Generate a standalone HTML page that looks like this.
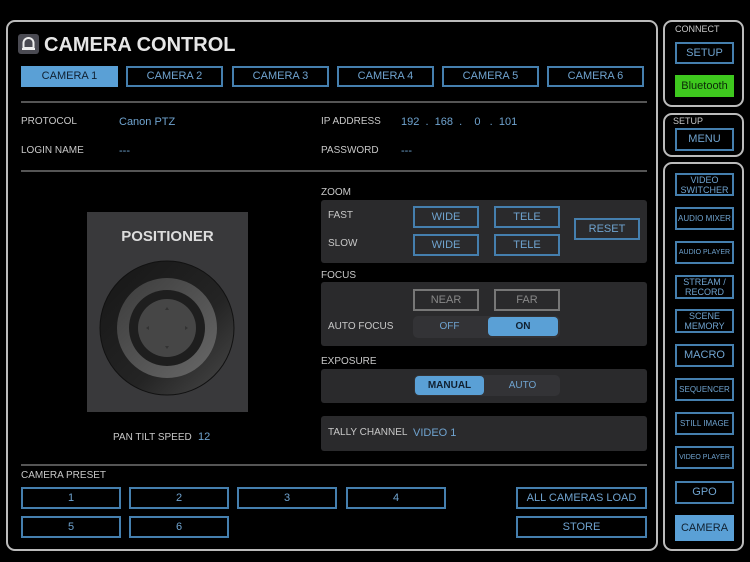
<!DOCTYPE html>
<html><head><meta charset="utf-8"><style>
*{margin:0;padding:0;box-sizing:border-box}
body{width:750px;height:562px;background:#000;position:relative;overflow:hidden;font-family:"Liberation Sans",sans-serif;color:#ccc}
div{position:absolute}
.fr{border:2px solid #bbb;border-radius:9px}
.b{border:2px solid #457fae;color:#6fa3cf;font-size:11px;display:flex;align-items:center;justify-content:center;text-align:center;line-height:11px}
.on{background:#5aa0d6;color:#102030;border-color:#5aa0d6}
.l{font-size:10px;color:#c8c8c8;white-space:nowrap}
.v{font-size:11px;color:#6fa3cf;white-space:nowrap}
.hr{height:2px;background:#555}
.p{background:#2a2a2c;border-radius:3px}
.s{font-size:8px}
</style></head><body>
<div class="fr" style="left:6px;top:20px;width:652px;height:531px"></div>
<div class="fr" style="left:663px;top:20px;width:81px;height:87px"></div>
<div class="fr" style="left:663px;top:113px;width:81px;height:44px"></div>
<div class="fr" style="left:663px;top:162px;width:81px;height:389px"></div>

<div style="left:18px;top:34px;width:21px;height:20px;background:#4a4a52;border-radius:3px"></div>
<svg style="position:absolute;left:18px;top:34px" width="21" height="20"><path d="M5.5 14 V9 a5 5 0 0 1 10 0 V14 Z" fill="none" stroke="#eee" stroke-width="2"/><rect x="4" y="14" width="13" height="2" fill="#eee"/></svg>
<div style="left:44px;top:34px;font-size:20px;font-weight:bold;color:#e6e6e6">CAMERA CONTROL</div>

<div class="b on" style="left:21px;top:66px;width:97px;height:21px">CAMERA 1</div>
<div class="b" style="left:126px;top:66px;width:97px;height:21px">CAMERA 2</div>
<div class="b" style="left:232px;top:66px;width:97px;height:21px">CAMERA 3</div>
<div class="b" style="left:337px;top:66px;width:97px;height:21px">CAMERA 4</div>
<div class="b" style="left:442px;top:66px;width:97px;height:21px">CAMERA 5</div>
<div class="b" style="left:547px;top:66px;width:97px;height:21px">CAMERA 6</div>

<div class="hr" style="left:21px;top:101px;width:626px"></div>
<div class="l" style="left:21px;top:116px">PROTOCOL</div>
<div class="v" style="left:119px;top:116px">Canon PTZ</div>
<div class="l" style="left:21px;top:145px">LOGIN NAME</div>
<div class="v" style="left:119px;top:145px">---</div>
<div class="l" style="left:321px;top:116px">IP ADDRESS</div>
<div class="v" style="left:401px;top:116px">192&nbsp; .&nbsp; 168&nbsp; .&nbsp;&nbsp;&nbsp; 0&nbsp;&nbsp; .&nbsp; 101</div>
<div class="l" style="left:321px;top:145px">PASSWORD</div>
<div class="v" style="left:401px;top:145px">---</div>
<div class="hr" style="left:21px;top:170px;width:626px"></div>

<div style="left:87px;top:212px;width:161px;height:200px;background:#39393b"></div>
<div style="left:87px;top:228px;width:161px;text-align:center;font-size:15px;font-weight:bold;color:#ddd">POSITIONER</div>
<svg style="position:absolute;left:87px;top:250px" width="161" height="160">
<defs><linearGradient id="g" x1="0" y1="0" x2="1" y2="1"><stop offset="0" stop-color="#161616"/><stop offset="0.6" stop-color="#242424"/><stop offset="1" stop-color="#4a4a4a"/></linearGradient>
<linearGradient id="g2" x1="0" y1="0" x2="1" y2="1"><stop offset="0" stop-color="#3c3c3c"/><stop offset="1" stop-color="#686868"/></linearGradient></defs>
<circle cx="80" cy="78" r="67" fill="url(#g)" stroke="#111" stroke-width="1"/>
<circle cx="80" cy="78" r="50" fill="url(#g2)"/>
<circle cx="80" cy="78" r="38" fill="#1e1e1e"/>
<circle cx="80" cy="78" r="29" fill="#464646"/>
<path d="M78 60 l2-3 2 3z M78 96 l2 3 2-3z M62 76 l-3 2 3 2z M98 76 l3 2-3 2z" fill="#333"/>
</svg>
<div class="l" style="left:113px;top:432px">PAN TILT SPEED</div>
<div class="v" style="left:198px;top:431px">12</div>

<div class="l" style="left:321px;top:187px">ZOOM</div>
<div class="p" style="left:321px;top:200px;width:326px;height:63px"></div>
<div class="l" style="left:328px;top:210px">FAST</div>
<div class="l" style="left:328px;top:238px">SLOW</div>
<div class="b" style="left:413px;top:206px;width:66px;height:22px">WIDE</div>
<div class="b" style="left:494px;top:206px;width:66px;height:22px">TELE</div>
<div class="b" style="left:413px;top:234px;width:66px;height:22px">WIDE</div>
<div class="b" style="left:494px;top:234px;width:66px;height:22px">TELE</div>
<div class="b" style="left:574px;top:218px;width:66px;height:22px">RESET</div>

<div class="l" style="left:321px;top:270px">FOCUS</div>
<div class="p" style="left:321px;top:282px;width:326px;height:64px"></div>
<div class="b" style="left:413px;top:289px;width:66px;height:22px;border-color:#777;color:#888">NEAR</div>
<div class="b" style="left:494px;top:289px;width:66px;height:22px;border-color:#777;color:#888">FAR</div>
<div class="l" style="left:328px;top:321px">AUTO FOCUS</div>
<div style="left:413px;top:316px;width:147px;height:22px;background:#333336;border-radius:5px"></div>
<div class="v" style="left:413px;top:321px;width:73px;text-align:center;font-size:10px">OFF</div>
<div style="left:488px;top:317px;width:70px;height:19px;background:#5aa0d6;border-radius:4px;font-size:10px;font-weight:bold;color:#102030;text-align:center;line-height:19px">ON</div>

<div class="l" style="left:321px;top:356px">EXPOSURE</div>
<div class="p" style="left:321px;top:369px;width:326px;height:34px"></div>
<div style="left:414px;top:375px;width:146px;height:21px;background:#333336;border-radius:5px"></div>
<div style="left:415px;top:376px;width:69px;height:19px;background:#5aa0d6;border-radius:4px;font-size:10px;font-weight:bold;color:#102030;text-align:center;line-height:19px">MANUAL</div>
<div class="v" style="left:486px;top:380px;width:73px;text-align:center;font-size:10px">AUTO</div>

<div class="p" style="left:321px;top:416px;width:326px;height:35px"></div>
<div class="l" style="left:328px;top:427px">TALLY CHANNEL</div>
<div class="v" style="left:413px;top:427px">VIDEO 1</div>

<div class="hr" style="left:21px;top:464px;width:626px"></div>
<div class="l" style="left:21px;top:470px">CAMERA PRESET</div>
<div class="b" style="left:21px;top:487px;width:100px;height:22px">1</div>
<div class="b" style="left:129px;top:487px;width:100px;height:22px">2</div>
<div class="b" style="left:237px;top:487px;width:100px;height:22px">3</div>
<div class="b" style="left:346px;top:487px;width:100px;height:22px">4</div>
<div class="b" style="left:21px;top:516px;width:100px;height:22px">5</div>
<div class="b" style="left:129px;top:516px;width:100px;height:22px">6</div>
<div class="b" style="left:516px;top:487px;width:131px;height:22px">ALL CAMERAS LOAD</div>
<div class="b" style="left:516px;top:516px;width:131px;height:22px">STORE</div>

<div class="l" style="left:675px;top:24px;font-size:9px">CONNECT</div>
<div class="b" style="left:675px;top:42px;width:59px;height:22px">SETUP</div>
<div class="b" style="left:675px;top:75px;width:59px;height:22px;background:#3ec81e;border-color:#3ec81e;color:#0c2a08">Bluetooth</div>
<div class="l" style="left:673px;top:116px;font-size:9px">SETUP</div>
<div class="b" style="left:675px;top:128px;width:59px;height:23px">MENU</div>
<div class="b" style="left:675px;top:173px;width:59px;height:23px;font-size:9px;line-height:10px">VIDEO<br>SWITCHER</div>
<div class="b s" style="left:675px;top:207px;width:59px;height:23px">AUDIO MIXER</div>
<div class="b s" style="left:675px;top:241px;width:59px;height:23px;font-size:7px">AUDIO PLAYER</div>
<div class="b" style="left:675px;top:275px;width:59px;height:24px;font-size:9px;line-height:10px">STREAM /<br>RECORD</div>
<div class="b" style="left:675px;top:309px;width:59px;height:24px;font-size:9px;line-height:10px">SCENE<br>MEMORY</div>
<div class="b" style="left:675px;top:344px;width:59px;height:23px">MACRO</div>
<div class="b s" style="left:675px;top:378px;width:59px;height:23px">SEQUENCER</div>
<div class="b s" style="left:675px;top:412px;width:59px;height:23px">STILL IMAGE</div>
<div class="b s" style="left:675px;top:446px;width:59px;height:23px;font-size:7px">VIDEO PLAYER</div>
<div class="b" style="left:675px;top:481px;width:59px;height:23px">GPO</div>
<div class="b on" style="left:675px;top:515px;width:59px;height:26px">CAMERA</div>
</body></html>
